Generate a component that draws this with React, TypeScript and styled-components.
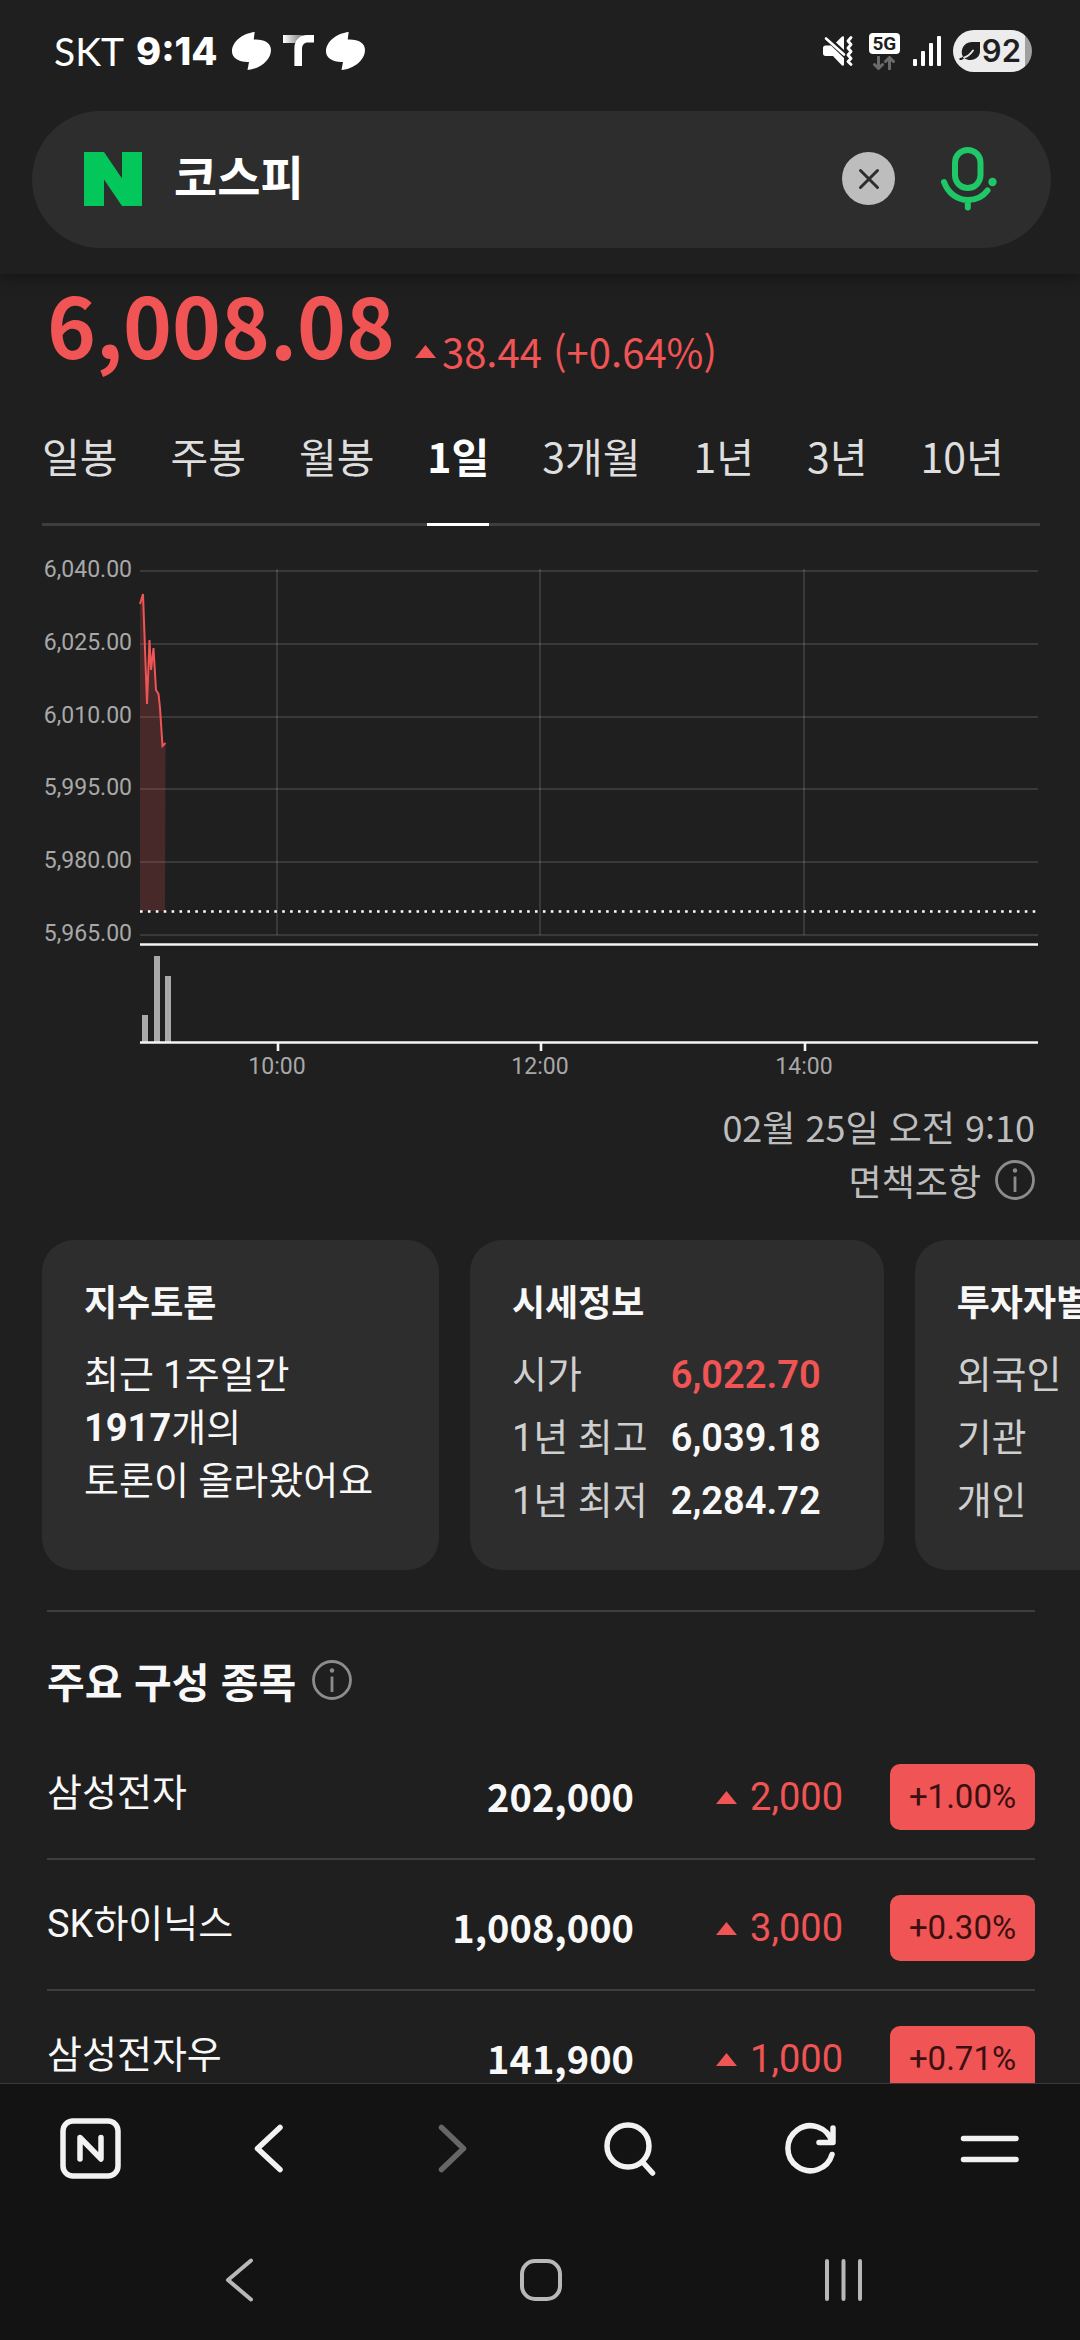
import React, { useState } from "react";
import styled, { createGlobalStyle } from "styled-components";

const colors = {
  page: "#1f1f1f",
  card: "#2d2d2d",
  bar: "#131313",
  rule: "#3e3e3e",
  text: "#f8f8f8",
  soft: "#dedede",
  muted: "#bdbdbd",
  up: "#f05454",
  green: "#03c75a",
};

const notoStack = `"Noto Sans CJK KR", "Noto Sans", sans-serif`;
const robotoStack = `Roboto, "Noto Sans CJK KR", sans-serif`;

const GlobalStyle = createGlobalStyle`
  *, *::before, *::after { box-sizing: border-box; }
  body { margin: 0; background: ${colors.page}; }
  button, input { font: inherit; color: inherit; border: 0; background: none; padding: 0; margin: 0; }
  svg { display: block; flex: none; }
`;

const Screen = styled.div`
  display: flex;
  flex-direction: column;
  height: 100vh;
  background: ${colors.page};
  color: ${colors.text};
  font-family: ${notoStack};
`;

/* Header */

const Header = styled.header`
  position: relative;
  z-index: 1;
  padding: 0 29px 26px 32px;
  background: ${colors.page};
  box-shadow: 0 4px 16px rgba(0, 0, 0, 0.35);
`;

const StatusBar = styled.div`
  display: flex;
  justify-content: space-between;
  align-items: center;
  height: 102px;
  margin-bottom: 9px;
  padding: 0 19px 0 22px;
  color: #fff;
`;

const StatusGroup = styled.div`
  display: flex;
  align-items: center;
  gap: 12px;
`;

const Carrier = styled.span`
  font: 400 39px/48px Lato, sans-serif;
`;

const Clock = styled.time`
  margin-right: 2px;
  font: 800 38px/48px Inter, sans-serif;
`;

const Network = styled.div`
  display: flex;
  flex-direction: column;
  align-items: center;
  gap: 2px;
  margin: 0 1px 0 3px;
`;

const NetworkLabel = styled.span`
  width: 31px;
  border-radius: 4px;
  background: #fff;
  color: ${colors.page};
  font: 700 19px/21px Roboto, sans-serif;
  text-align: center;
`;

const Battery = styled.div`
  display: flex;
  align-items: center;
  gap: 2px;
  height: 42px;
  padding: 0 11px 0 6px;
  border-radius: 21px;
  background: linear-gradient(to right, #ececec calc(100% - 7px), #a0a0a0 calc(100% - 7px));
  color: ${colors.page};
  font: 600 31px/42px Inter, sans-serif;
`;

const SearchBox = styled.form`
  display: flex;
  align-items: center;
  height: 137px;
  padding: 0 54px 2px 52px;
  border-radius: 69px;
  background: ${colors.card};
`;

const SearchInput = styled.input`
  flex: 1;
  min-width: 0;
  padding: 0 0 8px 32px;
  font-size: 47px;
  font-weight: 700;
  line-height: 64px;
  color: #fff;
  outline: none;
`;

const ClearButton = styled.button`
  display: grid;
  place-items: center;
  width: 53px;
  height: 53px;
  margin-right: 46px;
  border-radius: 50%;
  background: ${colors.muted};
`;

const IconButton = styled.button`
  display: grid;
  place-items: center;
`;

/* Quote */

const Content = styled.main`
  flex: 1;
  min-height: 0;
  overflow-x: hidden;
  overflow-y: auto;
  scrollbar-width: none;
`;

const Quote = styled.div`
  display: flex;
  align-items: flex-end;
  gap: 20px;
  padding-left: 47px;
  color: ${colors.up};
`;

const QuotePrice = styled.strong`
  padding-bottom: 9px;
  font-size: 83px;
  font-weight: 700;
  line-height: 98px;
`;

const QuoteChange = styled.span`
  display: flex;
  align-items: center;
  gap: 6px;
  font-size: 40px;
  line-height: 60px;
`;

const Tabs = styled.div`
  display: flex;
  gap: 53px;
  margin: 0 40px 0 42px;
  box-shadow: inset 0 -3px ${colors.rule};
`;

const Tab = styled.button<{ $active: boolean }>`
  flex: none;
  padding: 44px 0 38px;
  border-bottom: 3px solid ${(p) => (p.$active ? "#fff" : "transparent")};
  color: ${(p) => (p.$active ? "#fff" : colors.soft)};
  font-size: 41px;
  font-weight: ${(p) => (p.$active ? 700 : 400)};
  line-height: 60px;
`;

const ChartSvg = styled.svg`
  width: 100%;
  height: auto;
  font: 400 23px Roboto, sans-serif;
`;

const Notes = styled.div`
  display: flex;
  flex-direction: column;
  align-items: flex-end;
  padding: 13px 45px 33px;
  color: ${colors.muted};
  font-size: 36px;
  line-height: 54px;
`;

const NoteLink = styled.a`
  display: flex;
  align-items: center;
  gap: 14px;
  color: inherit;
  text-decoration: none;
`;

/* Cards */

const Cards = styled.div`
  display: flex;
  gap: 31px;
  padding-left: 42px;
  overflow-x: auto;
  scrollbar-width: none;
`;

const Card = styled.section`
  flex: none;
  min-width: 397px;
  padding: 36px 63px 42px 42px;
  border-radius: 32px;
  background: ${colors.card};
  font-family: ${robotoStack};
  font-size: 38px;
  line-height: 53px;
`;

const CardTitle = styled.h2`
  margin: 0 0 25px;
  font-family: ${notoStack};
  font-size: 36px;
  font-weight: 700;
  line-height: 48px;
`;

const CardText = styled.p`
  margin: 0;
`;

const Facts = styled.dl`
  display: grid;
  grid-template-columns: auto 1fr;
  gap: 10px 23px;
  margin: 0;
`;

const FactName = styled.dt`
  color: #cfcfcf;
`;

const FactValue = styled.dd<{ $up?: boolean }>`
  margin: 0;
  font-weight: 600;
  color: ${(p) => (p.$up ? colors.up : colors.text)};
`;

/* Constituents */

const Constituents = styled.section`
  margin: 40px 45px 0 47px;
  padding-top: 38px;
  border-top: 2px solid ${colors.rule};
`;

const SectionHead = styled.div`
  display: flex;
  align-items: center;
  gap: 16px;
  margin-bottom: 19px;
`;

const SectionTitle = styled.h2`
  margin: 0;
  font-size: 41px;
  font-weight: 700;
  line-height: 60px;
`;

const StockTable = styled.table`
  width: 100%;
  border-collapse: collapse;
  table-layout: fixed;
  font-family: ${robotoStack};
  font-size: 38px;
  line-height: 53px;
`;

const Col = styled.col<{ $width?: number }>`
  width: ${(p) => (p.$width ? `${p.$width}px` : "auto")};
`;

const StockRow = styled.tr`
  border-bottom: 2px solid ${colors.rule};
`;

const StockName = styled.th`
  padding: 31px 0 32px;
  font-weight: 400;
  text-align: left;
`;

const StockPrice = styled.td`
  padding: 33px 0 30px;
  font-family: ${notoStack};
  font-weight: 700;
  text-align: right;
`;

const StockCell = styled.td`
  padding: 35px 0 28px;
`;

const StockChange = styled.span`
  display: flex;
  align-items: center;
  justify-content: flex-end;
  gap: 13px;
  color: ${colors.up};
`;

const Rate = styled.span`
  display: block;
  width: 145px;
  margin-left: auto;
  border-radius: 10px;
  background: ${colors.up};
  color: #3a1010;
  font-size: 33px;
  line-height: 66px;
  text-align: center;
`;

/* Bottom bars */

const Toolbar = styled.nav`
  display: grid;
  grid-template-columns: repeat(6, 1fr);
  padding: 32px 0;
  border-top: 1px solid #3a3a3a;
  background: ${colors.bar};
  color: #f2f2f2;
`;

const SystemBar = styled.nav`
  display: grid;
  grid-template-columns: repeat(3, 1fr);
  padding: 44px 86px 36px;
  background: ${colors.bar};
  color: #b8b8b8;
`;

/* Icons */

const BoltIcon = () => (
  <svg width="39" height="38" viewBox="0 0 39 38" fill="#fff">
    <path d="M22.7 0L21.7 7.6C32 7 39 11 39 18C39 28 28 37 15.5 38L17 30C7 30.500 0 26 0 19.500C0 10 10 1.500 22.700 0Z" />
  </svg>
);

const TIcon = () => (
  <svg width="31" height="32" viewBox="0 0 31 32">
    <defs>
      <linearGradient id="tBar" x1="0" x2="1">
        <stop offset="0" stopColor="#fff" />
        <stop offset="1" stopColor="#777" />
      </linearGradient>
    </defs>
    <path d="M0 0H20L12 8H0Z" fill="url(#tBar)" />
    <path d="M31 0H24C16 0 11.400 6 11.400 13V31H19V14C19 10 21 7.500 25 7.500H31Z" fill="#fff" />
  </svg>
);

const MuteIcon = () => (
  <svg width="31" height="30" viewBox="0 0 31 30" fill="#fff">
    <path d="M2.500 9.500H8L21 22V28.500C21 30 19.500 30 18.500 29L10 20H2.500C1 20 0 19 0 17.500V12C0 10.500 1 9.500 2.500 9.500Z" />
    <path d="M13 6.500L18.500 1C19.500 0 21 0 21 1.500V14Z" />
    <path d="M3 2.500L21 18.500" stroke="#fff" strokeWidth="2.600" strokeLinecap="round" />
    <path d="M28 1.500L25 5L28 8.500L25 12L28 15.500L25 19L28 22.500L25 25.500L28 28.500" fill="none" stroke="#fff" strokeWidth="2.800" strokeLinecap="round" strokeLinejoin="round" />
  </svg>
);

const DataArrowsIcon = () => (
  <svg width="22" height="14" viewBox="0 0 22 14" fill="none" stroke="#6a6a6a" strokeWidth="3" strokeLinecap="round" strokeLinejoin="round">
    <path d="M5.500 1V12M1.500 8.500L5.500 12.500L9.500 8.500M16.500 13V2M12.500 5.500L16.500 1.500L20.500 5.500" />
  </svg>
);

const SignalIcon = () => (
  <svg width="28" height="30" viewBox="0 0 28 30" fill="#fff">
    <rect x="0" y="23" width="4" height="7" rx="1" />
    <rect x="8" y="15" width="4" height="15" rx="1" />
    <rect x="16" y="7" width="4" height="23" rx="1" />
    <rect x="24" y="0" width="4" height="30" rx="1" />
  </svg>
);

const LeafIcon = () => (
  <svg width="21" height="20" viewBox="0 0 21 20">
    <path d="M21 1V10C21 15.500 16.500 19 11.500 19C9 19 7 18.300 5.500 17.200C4 18.500 2.500 19.200 1 19C-.3 18.700 0 17.200 1.200 17C2.300 16.800 3.200 16.300 4 15.500C3 14 2.600 12.500 2.800 10.500C3.200 5 7.500 1 13 1Z" fill={colors.page} />
    <path d="M5 16.500C9 15.500 11.500 13 14 9.500" stroke="#ececec" strokeWidth="1.800" fill="none" strokeLinecap="round" />
  </svg>
);

const NaverLogo = () => (
  <svg width="58" height="54" viewBox="0 0 58 54" role="img" aria-label="NAVER">
    <path d="M0 0H20L38 26.500V0H58V54H38L20 27.500V54H0Z" fill={colors.green} />
  </svg>
);

const CloseIcon = () => (
  <svg width="22" height="22" viewBox="0 0 22 22" stroke={colors.card} strokeWidth="3" strokeLinecap="round">
    <path d="M2.500 2.500L19.500 19.500M19.500 2.500L2.500 19.500" />
  </svg>
);

const MicIcon = () => (
  <svg width="56" height="64" viewBox="0 0 56 64" fill="none" stroke="#1fc767" strokeWidth="6" strokeLinecap="round">
    <rect x="14" y="3" width="25.500" height="38" rx="12.700" />
    <path d="M3 35C7 46 16 53 27 53C35 53 42 49.500 46.500 43.500M26.800 54V60.500" />
    <circle cx="51.500" cy="35" r="4.200" fill="#1fc767" stroke="none" />
  </svg>
);

const UpIcon = () => (
  <svg width="21" height="13" viewBox="0 0 21 13" fill={colors.up}>
    <path d="M10.500 0L21 13H0Z" />
  </svg>
);

const InfoIcon = () => (
  <svg width="40" height="40" viewBox="0 0 40 40" fill="none" stroke="#8c8c8c" strokeWidth="2.800">
    <circle cx="20" cy="20" r="18.500" />
    <path d="M20 16.500V32" />
    <circle cx="20" cy="10.500" r="2.200" fill="#8c8c8c" stroke="none" />
  </svg>
);

type StrokeIconProps = { d: string; size: number; stroke: number; color?: string; children?: React.ReactNode };

const StrokeIcon = ({ d, size, stroke, color = "currentColor", children }: StrokeIconProps) => (
  <svg width={size} height={size} viewBox={`0 0 ${size} ${size}`} fill="none" stroke={color} strokeWidth={stroke} strokeLinecap="round" strokeLinejoin="round">
    {children}
    <path d={d} />
  </svg>
);

/* Intraday chart */

const PLOT_LEFT = 140;
const PLOT_RIGHT = 1038;
const levels = ["6,040.00", "6,025.00", "6,010.00", "5,995.00", "5,980.00", "5,965.00"];
const levelY = (i: number) => Math.round(45 + i * 72.75);
const hours = [
  { label: "10:00", x: 277 },
  { label: "12:00", x: 540 },
  { label: "14:00", x: 804 },
];
const line = "140,78 143,68 147,178 149.500,114 151,144 153.500,122 156,164 158.500,168 160,182 162.500,220 165.500,217";
const volumes = [
  { x: 142, height: 27 },
  { x: 154, height: 86 },
  { x: 165, height: 66 },
];

const Chart = () => (
  <ChartSvg viewBox="0 0 1080 560" role="img" aria-label="코스피 1일 차트">
    <g stroke="#fff" strokeOpacity="0.16" strokeWidth="1.500">
      {levels.map((label, i) => (
        <line key={label} x1={PLOT_LEFT} x2={PLOT_RIGHT} y1={levelY(i)} y2={levelY(i)} />
      ))}
      {hours.map((h) => (
        <line key={h.label} x1={h.x} x2={h.x} y1="43" y2="409" />
      ))}
    </g>
    <polygon points={`140,385 ${line} 165,385`} fill={colors.up} fillOpacity="0.2" />
    <polyline points={line} fill="none" stroke={colors.up} strokeWidth="2" />
    <line x1={PLOT_LEFT} x2={PLOT_RIGHT} y1="385.500" y2="385.500" stroke="#fff" strokeWidth="2.600" strokeDasharray="2.600 5.300" />
    <g fill="#a9a9a9">
      {volumes.map((v) => (
        <rect key={v.x} x={v.x} y={516 - v.height} width="6" height={v.height} />
      ))}
    </g>
    <g stroke="#f5f5f5" strokeWidth="2.600">
      <line x1={PLOT_LEFT} x2={PLOT_RIGHT} y1="418.500" y2="418.500" />
      <line x1={PLOT_LEFT} x2={PLOT_RIGHT} y1="516.500" y2="516.500" />
      {hours.map((h) => (
        <line key={h.label} x1={h.x + 1} x2={h.x + 1} y1="516" y2="525" />
      ))}
    </g>
    <g fill="#a8a8a8">
      {levels.map((label, i) => (
        <text key={label} x="132" y={levelY(i) + 6} textAnchor="end">{label}</text>
      ))}
      {hours.map((h) => (
        <text key={h.label} x={h.x} y="548" textAnchor="middle">{h.label}</text>
      ))}
    </g>
  </ChartSvg>
);

/* Data */

const periods = ["일봉", "주봉", "월봉", "1일", "3개월", "1년", "3년", "10년"];
const facts = [
  { name: "시가", value: "6,022.70", up: true },
  { name: "1년 최고", value: "6,039.18" },
  { name: "1년 최저", value: "2,284.72" },
];
const investors = ["외국인", "기관", "개인"];
const stocks = [
  { name: "삼성전자", price: "202,000", change: "2,000", rate: "+1.00%" },
  { name: "SK하이닉스", price: "1,008,000", change: "3,000", rate: "+0.30%" },
  { name: "삼성전자우", price: "141,900", change: "1,000", rate: "+0.71%" },
];

export default function App() {
  const [query, setQuery] = useState("코스피");
  const [period, setPeriod] = useState("1일");

  return (
    <Screen lang="ko">
      <GlobalStyle />
      <Header>
        <StatusBar>
          <StatusGroup>
            <Carrier>SKT</Carrier>
            <Clock>9:14</Clock>
            <BoltIcon />
            <TIcon />
            <BoltIcon />
          </StatusGroup>
          <StatusGroup>
            <MuteIcon />
            <Network>
              <NetworkLabel>5G</NetworkLabel>
              <DataArrowsIcon />
            </Network>
            <SignalIcon />
            <Battery>
              <LeafIcon />
              92
            </Battery>
          </StatusGroup>
        </StatusBar>
        <SearchBox role="search" onSubmit={(e) => e.preventDefault()}>
          <NaverLogo />
          <SearchInput type="text" aria-label="검색어" value={query} onChange={(e) => setQuery(e.target.value)} />
          <ClearButton type="button" aria-label="지우기" onClick={() => setQuery("")}>
            <CloseIcon />
          </ClearButton>
          <IconButton type="button" aria-label="음성 검색">
            <MicIcon />
          </IconButton>
        </SearchBox>
      </Header>

      <Content>
        <Quote>
          <QuotePrice>6,008.08</QuotePrice>
          <QuoteChange>
            <UpIcon />
            38.44 (+0.64%)
          </QuoteChange>
        </Quote>

        <Tabs role="tablist">
          {periods.map((p) => (
            <Tab key={p} type="button" role="tab" aria-selected={p === period} $active={p === period} onClick={() => setPeriod(p)}>
              {p}
            </Tab>
          ))}
        </Tabs>

        <Chart />

        <Notes>
          <time>02월 25일 오전 9:10</time>
          <NoteLink href="#disclaimer">
            면책조항
            <InfoIcon />
          </NoteLink>
        </Notes>

        <Cards>
          <Card>
            <CardTitle>지수토론</CardTitle>
            <CardText>
              최근 1주일간
              <br />
              <b>1917</b>개의
              <br />
              토론이 올라왔어요
            </CardText>
          </Card>
          <Card>
            <CardTitle>시세정보</CardTitle>
            <Facts>
              {facts.map((f) => (
                <React.Fragment key={f.name}>
                  <FactName>{f.name}</FactName>
                  <FactValue $up={f.up}>{f.value}</FactValue>
                </React.Fragment>
              ))}
            </Facts>
          </Card>
          <Card>
            <CardTitle>투자자별</CardTitle>
            <Facts>
              {investors.map((name) => (
                <React.Fragment key={name}>
                  <FactName>{name}</FactName>
                  <FactValue />
                </React.Fragment>
              ))}
            </Facts>
          </Card>
        </Cards>

        <Constituents>
          <SectionHead>
            <SectionTitle>주요 구성 종목</SectionTitle>
            <IconButton type="button" aria-label="안내">
              <InfoIcon />
            </IconButton>
          </SectionHead>
          <StockTable>
            <colgroup>
              <Col />
              <Col $width={240} />
              <Col $width={209} />
              <Col $width={192} />
            </colgroup>
            <tbody>
              {stocks.map((s) => (
                <StockRow key={s.name}>
                  <StockName scope="row">{s.name}</StockName>
                  <StockPrice>{s.price}</StockPrice>
                  <StockCell>
                    <StockChange>
                      <UpIcon />
                      {s.change}
                    </StockChange>
                  </StockCell>
                  <StockCell>
                    <Rate>{s.rate}</Rate>
                  </StockCell>
                </StockRow>
              ))}
            </tbody>
          </StockTable>
        </Constituents>
      </Content>

      <Toolbar>
        <IconButton type="button" aria-label="홈">
          <StrokeIcon size={64} stroke={5.5} d="M22 43V21.500L43 43V21.500">
            <rect x="5" y="5" width="55" height="55" rx="10" />
          </StrokeIcon>
        </IconButton>
        <IconButton type="button" aria-label="뒤로">
          <StrokeIcon size={64} stroke={5.5} d="M42 11.500L19.500 32.500L42 53.500" />
        </IconButton>
        <IconButton type="button" aria-label="앞으로" disabled>
          <StrokeIcon size={64} stroke={5.5} color="#666" d="M23.500 11.500L45.500 32.500L23.500 53.500" />
        </IconButton>
        <IconButton type="button" aria-label="검색">
          <StrokeIcon size={64} stroke={5.5} d="M45 46.500L54.500 57">
            <circle cx="30" cy="30" r="21" />
          </StrokeIcon>
        </IconButton>
        <IconButton type="button" aria-label="새로고침">
          <StrokeIcon size={64} stroke={5.5} d="M54 26A22.500 22.500 0 1 0 54 38.500M55 12V26.500H41" />
        </IconButton>
        <IconButton type="button" aria-label="메뉴">
          <StrokeIcon size={64} stroke={5.5} d="M5.500 22.500H58M5.500 43.500H58" />
        </IconButton>
      </Toolbar>

      <SystemBar>
        <IconButton type="button" aria-label="시스템 뒤로">
          <StrokeIcon size={48} stroke={4} d="M38 4.500L15 24L38 43.500" />
        </IconButton>
        <IconButton type="button" aria-label="시스템 홈">
          <StrokeIcon size={48} stroke={4} d="">
            <rect x="6" y="5" width="38" height="38" rx="13" />
          </StrokeIcon>
        </IconButton>
        <IconButton type="button" aria-label="최근 앱">
          <StrokeIcon size={48} stroke={4} d="M8 5V43M24.500 5V43M41 5V43" />
        </IconButton>
      </SystemBar>
    </Screen>
  );
}
